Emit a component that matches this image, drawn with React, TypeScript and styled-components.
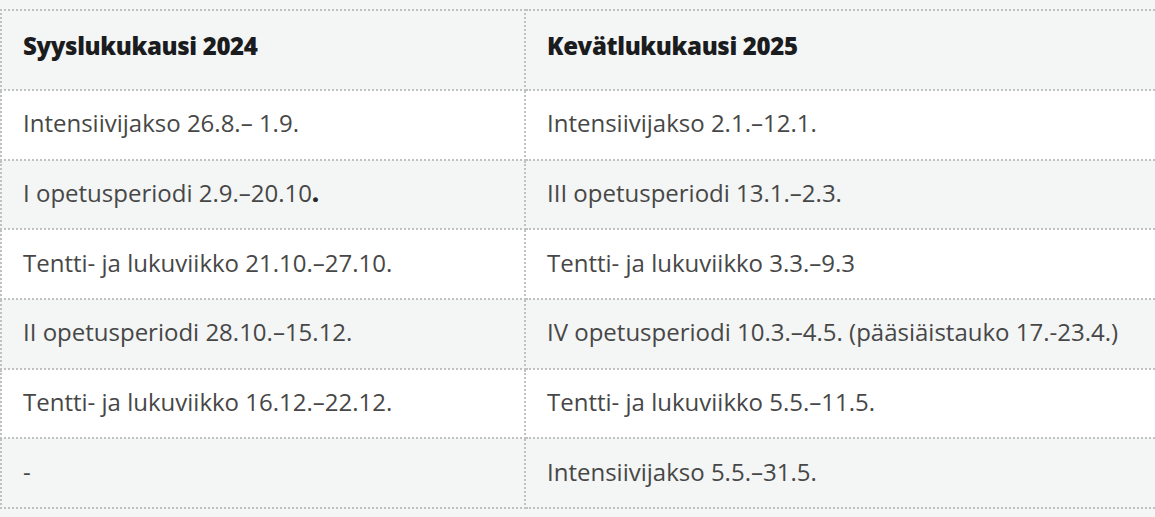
import type { ReactNode } from 'react';
import styled, { createGlobalStyle } from 'styled-components';

const GlobalStyle = createGlobalStyle`
  html, body {
    margin: 0;
    padding: 0;
    background: #f4f5f5;
    overflow: hidden;
  }
  body {
    font-family: "Open Sans", "Noto Sans", sans-serif;
  }
`;

const Page = styled.div`
  padding-top: 9px;
  width: 1155px;
  overflow: hidden;
`;

const Table = styled.table`
  border-collapse: collapse;
  table-layout: fixed;
  width: 1200px;
`;

const Col = styled.col<{ $width: number }>`
  width: ${({ $width }) => $width}px;
`;

const HeadCell = styled.th`
  border: 2px dotted #c0c2c2;
  background: #f4f5f5;
  height: 68px;
  padding: 0 21px 10px;
  text-align: left;
  font-size: 24px;
  font-weight: 800;
  letter-spacing: -0.35px;
  color: #1b1c1d;
`;

const Row = styled.tr<{ $shaded: boolean }>`
  background: ${({ $shaded }) => ($shaded ? '#f4f5f5' : '#ffffff')};
`;

const Cell = styled.td`
  border: 2px dotted #c0c2c2;
  height: 63.7px;
  padding: 0 21px 4px;
  font-size: 24px;
  color: #474747;
  white-space: nowrap;
`;

const BoldDot = styled.strong`
  font-weight: 800;
  color: #2a2a2a;
`;

const rows: [ReactNode, ReactNode][] = [
  ['Intensiivijakso 26.8.– 1.9.', 'Intensiivijakso 2.1.–12.1.'],
  [
    <>
      I opetusperiodi 2.9.–20.10<BoldDot>.</BoldDot>
    </>,
    'III opetusperiodi 13.1.–2.3.',
  ],
  ['Tentti- ja lukuviikko 21.10.–27.10.', 'Tentti- ja lukuviikko 3.3.–9.3'],
  ['II opetusperiodi 28.10.–15.12.', 'IV opetusperiodi 10.3.–4.5. (pääsiäistauko 17.-23.4.)'],
  ['Tentti- ja lukuviikko 16.12.–22.12.', 'Tentti- ja lukuviikko 5.5.–11.5.'],
  ['-', 'Intensiivijakso 5.5.–31.5.'],
];

const App = () => {
  return (
    <Page>
      <GlobalStyle />
      <Table>
        <colgroup>
          <Col $width={524} />
          <Col $width={676} />
        </colgroup>
        <thead>
          <tr>
            <HeadCell>Syyslukukausi 2024</HeadCell>
            <HeadCell>Kevätlukukausi 2025</HeadCell>
          </tr>
        </thead>
        <tbody>
          {rows.map(([autumn, spring], i) => (
            <Row key={i} $shaded={i % 2 === 1}>
              <Cell>{autumn}</Cell>
              <Cell>{spring}</Cell>
            </Row>
          ))}
        </tbody>
      </Table>
    </Page>
  );
};

export default App;
